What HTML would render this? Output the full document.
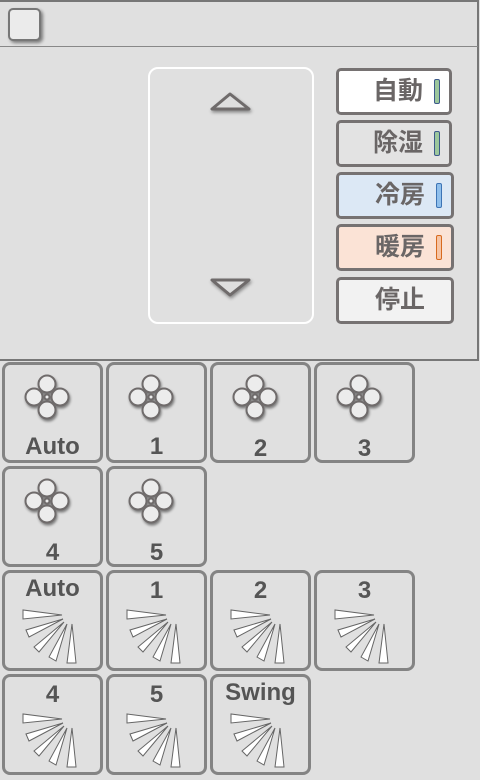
<!DOCTYPE html>
<html><head><meta charset="utf-8"><style>
body{margin:0;width:480px;height:780px;background:#e0e0e0;font-family:"Liberation Sans","Noto Sans CJK JP",sans-serif;position:relative;overflow:hidden}
.top{position:absolute;left:0;top:0;width:477px;height:357px;border:2px solid #777;border-left:none;background:#e0e0e0}
.hdr{position:absolute;left:0;top:46px;width:478px;height:1px;background:#888}
.cb{position:absolute;left:8px;top:8px;width:29px;height:29px;border:2px solid #777;border-radius:5px;background:#ebebeb;box-shadow:2px 2px 3px rgba(0,0,0,.45)}
.pad{position:absolute;left:148px;top:67px;width:162px;height:253px;border:2px solid #fff;border-radius:10px}
.mb{position:absolute;left:336px;width:110px;height:41px;border:3px solid #767272;border-radius:5px;font-weight:bold;font-size:25px;color:#6a6666;line-height:41px;text-align:right;box-sizing:content-box}
.mb span{margin-right:26px}
.ind{position:absolute;right:9px;top:8px;width:4px;height:23px;border:1.5px solid;border-radius:2px}
.b{position:absolute;width:95px;height:95px;border:3px solid #848484;border-radius:8px;background:#e0e0e0;box-sizing:content-box}
.b svg{position:absolute;left:0;top:0}
.fan{filter:drop-shadow(1.5px 2px 1.2px rgba(0,0,0,.45))}
.lab{position:absolute;left:0;width:95px;text-align:center;font-weight:bold;font-size:24px;color:#555}
</style></head><body>
<div class="top"></div>
<div class="hdr"></div>
<div class="cb"></div>
<div class="pad"></div>
<svg style="position:absolute;left:0;top:0;filter:drop-shadow(1.5px 2.5px 1.5px rgba(0,0,0,.4))" width="480" height="360">
<polygon points="230,94 212,109 249,109" fill="#dedede" stroke="#6f6b6b" stroke-width="3" stroke-linejoin="round"/>
<polygon points="230,295 212,280 249,280" fill="#dedede" stroke="#6f6b6b" stroke-width="3" stroke-linejoin="round"/>
</svg>
<div class="mb" style="top:68px;background:#fff"><span>自動</span><div class="ind" style="background:#9cc79c;border-color:#3c5a8a"></div></div>
<div class="mb" style="top:120px;background:#e3e3e3"><span>除湿</span><div class="ind" style="background:#9cc79c;border-color:#3c5a8a"></div></div>
<div class="mb" style="top:172px;background:#dce8f5;width:112px"><span>冷房</span><div class="ind" style="background:#8fbfec;border-color:#3d74b5"></div></div>
<div class="mb" style="top:224px;background:#fbe3d6;width:112px"><span>暖房</span><div class="ind" style="background:#f6c4a4;border-color:#d86a1e"></div></div>
<div class="mb" style="top:277px;background:#f2f2f2;width:112px"><span>停止</span></div>

<svg width="0" height="0" style="position:absolute">
<defs>
<g id="fan" fill="#ececec" stroke="#6f6b6b" stroke-width="2">
<circle cx="42" cy="21" r="8.5"/><circle cx="29" cy="34" r="8.5"/><circle cx="55" cy="34" r="8.5"/><circle cx="42" cy="47" r="8.5"/><circle cx="42" cy="34" r="2.5"/>
</g>
<g id="vane" fill="#fff" stroke="#666" stroke-width="1">
<polygon points="20,40 20,49 59,45"/>
<polygon points="23,60 26,67 60,49"/>
<polygon points="31,77 36,82 61,52"/>
<polygon points="46,87 53,91 64,54"/>
<polygon points="64,93 73,93 69,54"/>
</g>
</defs></svg>

<div class="b" style="left:2px;top:362px"><svg class="fan" width="95" height="95"><use href="#fan" y="-2"/></svg><div class="lab" style="top:68px">Auto</div></div>
<div class="b" style="left:106px;top:362px"><svg class="fan" width="95" height="95"><use href="#fan" y="-2"/></svg><div class="lab" style="top:68px">1</div></div>
<div class="b" style="left:210px;top:362px"><svg class="fan" width="95" height="95"><use href="#fan" y="-2"/></svg><div class="lab" style="top:70px">2</div></div>
<div class="b" style="left:314px;top:362px"><svg class="fan" width="95" height="95"><use href="#fan" y="-2"/></svg><div class="lab" style="top:70px">3</div></div>
<div class="b" style="left:2px;top:466px"><svg class="fan" width="95" height="95"><use href="#fan" y="-2"/></svg><div class="lab" style="top:70px">4</div></div>
<div class="b" style="left:106px;top:466px"><svg class="fan" width="95" height="95"><use href="#fan" y="-2"/></svg><div class="lab" style="top:70px">5</div></div>

<div class="b" style="left:2px;top:570px"><svg width="95" height="95"><use href="#vane" x="-2" y="-3"/></svg><div class="lab" style="top:2px">Auto</div></div>
<div class="b" style="left:106px;top:570px"><svg width="95" height="95"><use href="#vane" x="-2" y="-3"/></svg><div class="lab" style="top:4px">1</div></div>
<div class="b" style="left:210px;top:570px"><svg width="95" height="95"><use href="#vane" x="-2" y="-3"/></svg><div class="lab" style="top:4px">2</div></div>
<div class="b" style="left:314px;top:570px"><svg width="95" height="95"><use href="#vane" x="-2" y="-3"/></svg><div class="lab" style="top:4px">3</div></div>
<div class="b" style="left:2px;top:674px"><svg width="95" height="95"><use href="#vane" x="-2" y="-3"/></svg><div class="lab" style="top:4px">4</div></div>
<div class="b" style="left:106px;top:674px"><svg width="95" height="95"><use href="#vane" x="-2" y="-3"/></svg><div class="lab" style="top:4px">5</div></div>
<div class="b" style="left:210px;top:674px"><svg width="95" height="95"><use href="#vane" x="-2" y="-3"/></svg><div class="lab" style="top:2px">Swing</div></div>
</body></html>
